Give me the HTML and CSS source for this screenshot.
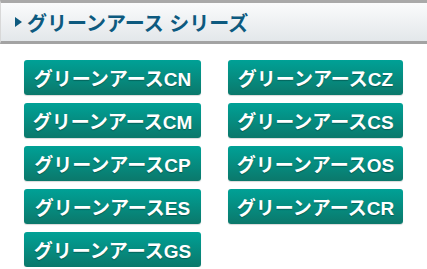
FILE: index.html
```html
<!DOCTYPE html>
<html lang="ja">

<head>
    <meta charset="UTF-8">
    <meta name="viewport" content="width=device-width, initial-scale=1.0">
    <title>グリーンアース シリーズ</title>
    <link rel="stylesheet" href="styles.css">
</head>

<body>
    <h2 class="series-title"><span class="arrow"></span>グリーンアース シリーズ</h2>

    <div class="series-list">
        <a href="#" class="series-btn">グリーンアースCN</a>
        <a href="#" class="series-btn">グリーンアースCZ</a>
        <a href="#" class="series-btn">グリーンアースCM</a>
        <a href="#" class="series-btn">グリーンアースCS</a>
        <a href="#" class="series-btn">グリーンアースCP</a>
        <a href="#" class="series-btn">グリーンアースOS</a>
        <a href="#" class="series-btn">グリーンアースES</a>
        <a href="#" class="series-btn">グリーンアースCR</a>
        <a href="#" class="series-btn">グリーンアースGS</a>
    </div>
</body>

</html>
```

FILE: styles.css
```css
body {
    font-family: "Liberation Sans", "Noto Sans CJK JP", sans-serif;
    margin: 0;
    padding: 0;
    background-color: #fff;
}

.series-title {
    margin: 0;
    height: 38px;
    display: flex;
    align-items: center;
    padding-left: 14px;
    font-size: 20px;
    font-weight: bold;
    color: #0d5a7f;
    background: linear-gradient(#fafbfc, #e3e7ea);
    border-top: 3px solid #a9a9a9;
    border-bottom: 3px solid #a3a3a3;
    border-left: 1px solid #d8d8d8;
}

.arrow {
    width: 0;
    height: 0;
    border-top: 5px solid transparent;
    border-bottom: 5px solid transparent;
    border-left: 7px solid #0d5a7f;
    margin-right: 5px;
}

.series-list {
    display: grid;
    grid-template-columns: 177px 175px;
    column-gap: 27px;
    row-gap: 8px;
    padding-left: 24px;
    margin-top: 16px;
}

.series-btn {
    display: flex;
    align-items: center;
    justify-content: center;
    height: 35px;
    border-radius: 3px;
    background: linear-gradient(#00a196, #0b786b);
    color: #fff;
    font-size: 19px;
    font-weight: bold;
    text-decoration: none;
    text-shadow: 0 1px 1px rgba(0, 0, 0, 0.3);
    box-shadow: 0 1px 1px rgba(0, 0, 0, 0.15);
}
```
